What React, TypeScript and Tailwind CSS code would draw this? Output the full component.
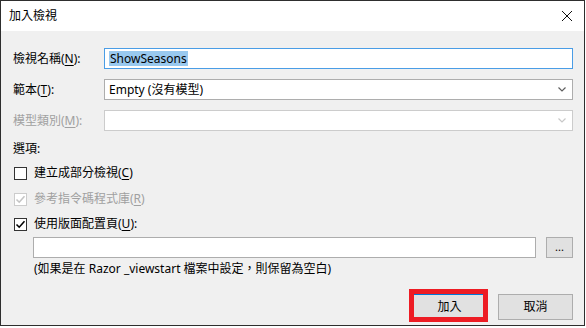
import React from 'react'

const font = { fontFamily: '"Noto Sans", "Noto Sans CJK TC", sans-serif' }

function U({ children }: { children: React.ReactNode }) {
	return <span className="underline underline-offset-2 decoration-1">{children}</span>
}

function Chevron({ disabled }: { disabled?: boolean }) {
	return (
		<svg width="8" height="5" viewBox="0 0 8 5" className="mr-[6px]">
			<path d="M0.5 0.5 L4 4 L7.5 0.5" fill="none" stroke={disabled ? '#c8c8c8' : '#5f5f5f'} strokeWidth="1.2" />
		</svg>
	)
}

function Check({ checked, disabled }: { checked?: boolean; disabled?: boolean }) {
	return (
		<div
			className={`w-[13px] h-[13px] border flex items-center justify-center ${
				disabled ? 'border-[#cccccc] bg-[#ffffff]' : 'border-[#333333] bg-white'
			}`}
		>
			{checked && (
				<svg width="11" height="11" viewBox="0 0 11 11">
					<path d="M1.5 5.5 L4.2 8.2 L9.5 2.2" fill="none" stroke={disabled ? '#c4c4c4' : '#000000'} strokeWidth="1.6" />
				</svg>
			)}
		</div>
	)
}

export default function App() {
	return (
		<div className="w-[586px] h-[328px] bg-white text-[12px] leading-[16px] text-black" style={font}>
			{/* WINDOW */}
			<div className="w-[585px] h-[326px] border border-[#2e2e2e] flex flex-col">
				{/* TITLE BAR */}
				<div className="h-[30px] bg-white flex items-center justify-between pl-[8px] pr-[8px]">
					<span className="text-[12px]">加入檢視</span>
					<svg width="12" height="12" viewBox="0 0 12 12" className="mr-[3px]">
						<path d="M1 1 L11 11 M11 1 L1 11" stroke="#111" strokeWidth="1" />
					</svg>
				</div>

				{/* BODY */}
				<div className="flex-1 bg-[#f0f0f0] flex flex-col pl-[12px] pr-[11px] pt-[17px]">
					<div className="grid grid-cols-[91px_469px] gap-y-[10px]">
						<div className="flex items-center">
							檢視名稱(<U>N</U>):
						</div>
						<div className="h-[21px] border border-[#4a9de6] bg-white flex items-center pl-[4px]">
							<span className="bg-[#99c9ef] leading-[15px] px-[1px]">ShowSeasons</span>
						</div>

						<div className="flex items-center">
							範本(<U>T</U>):
						</div>
						<div className="h-[21px] border border-[#adadad] bg-white flex items-center justify-between pl-[4px]">
							<span>Empty (沒有模型)</span>
							<Chevron />
						</div>

						<div className="flex items-center text-[#a0a0a0]">
							模型類別(<U>M</U>):
						</div>
						<div className="h-[21px] border border-[#cccccc] bg-white flex items-center justify-end">
							<Chevron disabled />
						</div>
					</div>

					<div className="mt-[10px]">選項:</div>

					<div className="flex flex-col gap-y-[10px] mt-[8px] pl-[1px]">
						<div className="flex items-center gap-x-[7px] h-[16px]">
							<Check />
							<span>
								建立成部分檢視(<U>C</U>)
							</span>
						</div>
						<div className="flex items-center gap-x-[7px] h-[16px] text-[#a0a0a0]">
							<Check checked disabled />
							<span>
								參考指令碼程式庫(<U>R</U>)
							</span>
						</div>
						<div className="flex items-center gap-x-[7px] h-[16px] -mt-[1px]">
							<Check checked />
							<span>
								使用版面配置頁(<U>U</U>):
							</span>
						</div>
					</div>

					<div className="flex mt-[5px] ml-[20px]">
						<div className="w-[503px] h-[21px] border border-[#adadad] bg-white" />
						<div className="ml-[10px] w-[27px] h-[21px] border border-[#adadad] bg-[#e1e1e1] flex items-center justify-center text-[11px] leading-none pb-[3px]">
							...
						</div>
					</div>

					<div className="mt-[3px] ml-[21px]">(如果是在 Razor _viewstart 檔案中設定，則保留為空白)</div>

					{/* BUTTONS */}
					<div className="flex justify-end gap-x-[11px] mt-[17px]">
						<div className="relative">
							<div className="w-[75px] h-[26px] border border-[#0078d7] bg-[#e1e1e1] flex items-center justify-center">
								加入
							</div>
							<div className="absolute left-[-3px] top-[-5px] right-[-1px] bottom-[-2px] border-[5px] border-[#ed1c24]" />
						</div>
						<div className="w-[75px] h-[26px] border border-[#adadad] bg-[#e1e1e1] flex items-center justify-center">
							取消
						</div>
					</div>
				</div>
			</div>
		</div>
	)
}
